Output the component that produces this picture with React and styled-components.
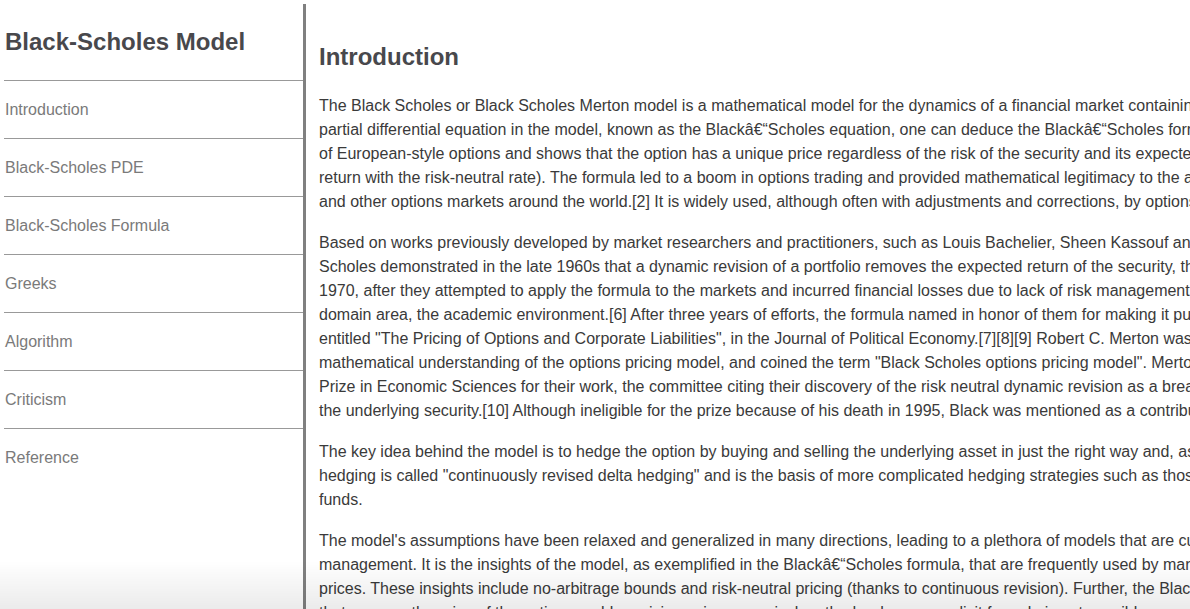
import React from 'react';
import styled, { createGlobalStyle } from 'styled-components';

const GlobalStyle = createGlobalStyle`
	html, body {
		margin: 0;
		padding: 0;
		background: #fff;
		overflow: hidden;
	}
	body {
		font-family: "Liberation Sans", Arial, Helvetica, sans-serif;
	}
`;

const Page = styled.div`
	display: flex;
	align-items: flex-start;
	padding: 4px 0 0 4px;
	min-height: 609px;
	box-sizing: border-box;
`;

const Sidebar = styled.nav`
	flex: 0 0 299px;
	align-self: stretch;
	border-right: 3px solid #808080;
	min-height: 700px;
`;

const SideTitle = styled.h1`
	margin: 0;
	height: 76px;
	display: flex;
	align-items: center;
	padding-left: 1px;
	font-size: 24px;
	font-weight: bold;
	color: #48484c;
	border-bottom: 1px solid #999;
`;

const NavList = styled.ul`
	list-style: none;
	margin: 0;
	padding: 0;
`;

const NavItem = styled.li`
	height: 57px;
	display: flex;
	align-items: center;
	padding-left: 1px;
	font-size: 16px;
	color: #7a7a7a;
	border-bottom: ${props => (props.last ? 'none' : '1px solid #999')};
	cursor: pointer;
`;

const Main = styled.main`
	flex: 0 0 1240px;
	padding: 0 0 0 13px;
`;

const Heading = styled.h2`
	margin: 39px 0 23px;
	font-size: 24px;
	line-height: 28px;
	font-weight: bold;
	color: #48484c;
`;

const Para = styled.p`
	margin: 0 0 17px;
	font-size: 16px;
	line-height: 24px;
	color: #3a3a3a;
`;

const BottomFade = styled.div`
	position: fixed;
	left: 0;
	right: 0;
	bottom: 0;
	height: 48px;
	pointer-events: none;
	background: linear-gradient(to bottom, rgba(0, 0, 0, 0), rgba(0, 0, 0, 0.08));
`;

const navLinks = [
	'Introduction',
	'Black-Scholes PDE',
	'Black-Scholes Formula',
	'Greeks',
	'Algorithm',
	'Criticism',
	'Reference',
];

const dash = 'â€\u201c';

const paragraphs = [
	`The Black Scholes or Black Scholes Merton model is a mathematical model for the dynamics of a financial market containing derivative investment instruments. From the partial differential equation in the model, known as the Black${dash}Scholes equation, one can deduce the Black${dash}Scholes formula, which gives a theoretical estimate of the price of European-style options and shows that the option has a unique price regardless of the risk of the security and its expected return (instead replacing the security's expected return with the risk-neutral rate). The formula led to a boom in options trading and provided mathematical legitimacy to the activities of the Chicago Board Options Exchange and other options markets around the world.[2] It is widely used, although often with adjustments and corrections, by options market participants.[3]`,
	`Based on works previously developed by market researchers and practitioners, such as Louis Bachelier, Sheen Kassouf and Ed Thorp among others, Fischer Black and Myron Scholes demonstrated in the late 1960s that a dynamic revision of a portfolio removes the expected return of the security, thus inventing the risk neutral argument.[4][5] In 1970, after they attempted to apply the formula to the markets and incurred financial losses due to lack of risk management in their trades, they decided to focus in their domain area, the academic environment.[6] After three years of efforts, the formula named in honor of them for making it public, was finally published in 1973 in an article entitled "The Pricing of Options and Corporate Liabilities", in the Journal of Political Economy.[7][8][9] Robert C. Merton was the first to publish a paper expanding the mathematical understanding of the options pricing model, and coined the term "Black Scholes options pricing model". Merton and Scholes received the 1997 Nobel Memorial Prize in Economic Sciences for their work, the committee citing their discovery of the risk neutral dynamic revision as a breakthrough that separates the option from the risk of the underlying security.[10] Although ineligible for the prize because of his death in 1995, Black was mentioned as a contributor by the Swedish Academy.[11]`,
	`The key idea behind the model is to hedge the option by buying and selling the underlying asset in just the right way and, as a consequence, to eliminate risk. This type of hedging is called "continuously revised delta hedging" and is the basis of more complicated hedging strategies such as those engaged in by investment banks and hedge funds.`,
	`The model's assumptions have been relaxed and generalized in many directions, leading to a plethora of models that are currently used in derivative pricing and risk management. It is the insights of the model, as exemplified in the Black${dash}Scholes formula, that are frequently used by market participants, as distinguished from the actual prices. These insights include no-arbitrage bounds and risk-neutral pricing (thanks to continuous revision). Further, the Black${dash}Scholes equation, a partial differential equation that governs the price of the option, enables pricing using numerical methods when an explicit formula is not possible.`,
];

export default function App() {
	return (
		<>
			<GlobalStyle />
			<Page>
				<Sidebar>
					<SideTitle>Black-Scholes Model</SideTitle>
					<NavList>
						{navLinks.map((link, i) => (
							<NavItem key={link} last={i === navLinks.length - 1}>
								{link}
							</NavItem>
						))}
					</NavList>
				</Sidebar>
				<Main>
					<Heading>Introduction</Heading>
					{paragraphs.map((text, i) => (
						<Para key={i}>{text}</Para>
					))}
				</Main>
			</Page>
			<BottomFade />
		</>
	);
}
